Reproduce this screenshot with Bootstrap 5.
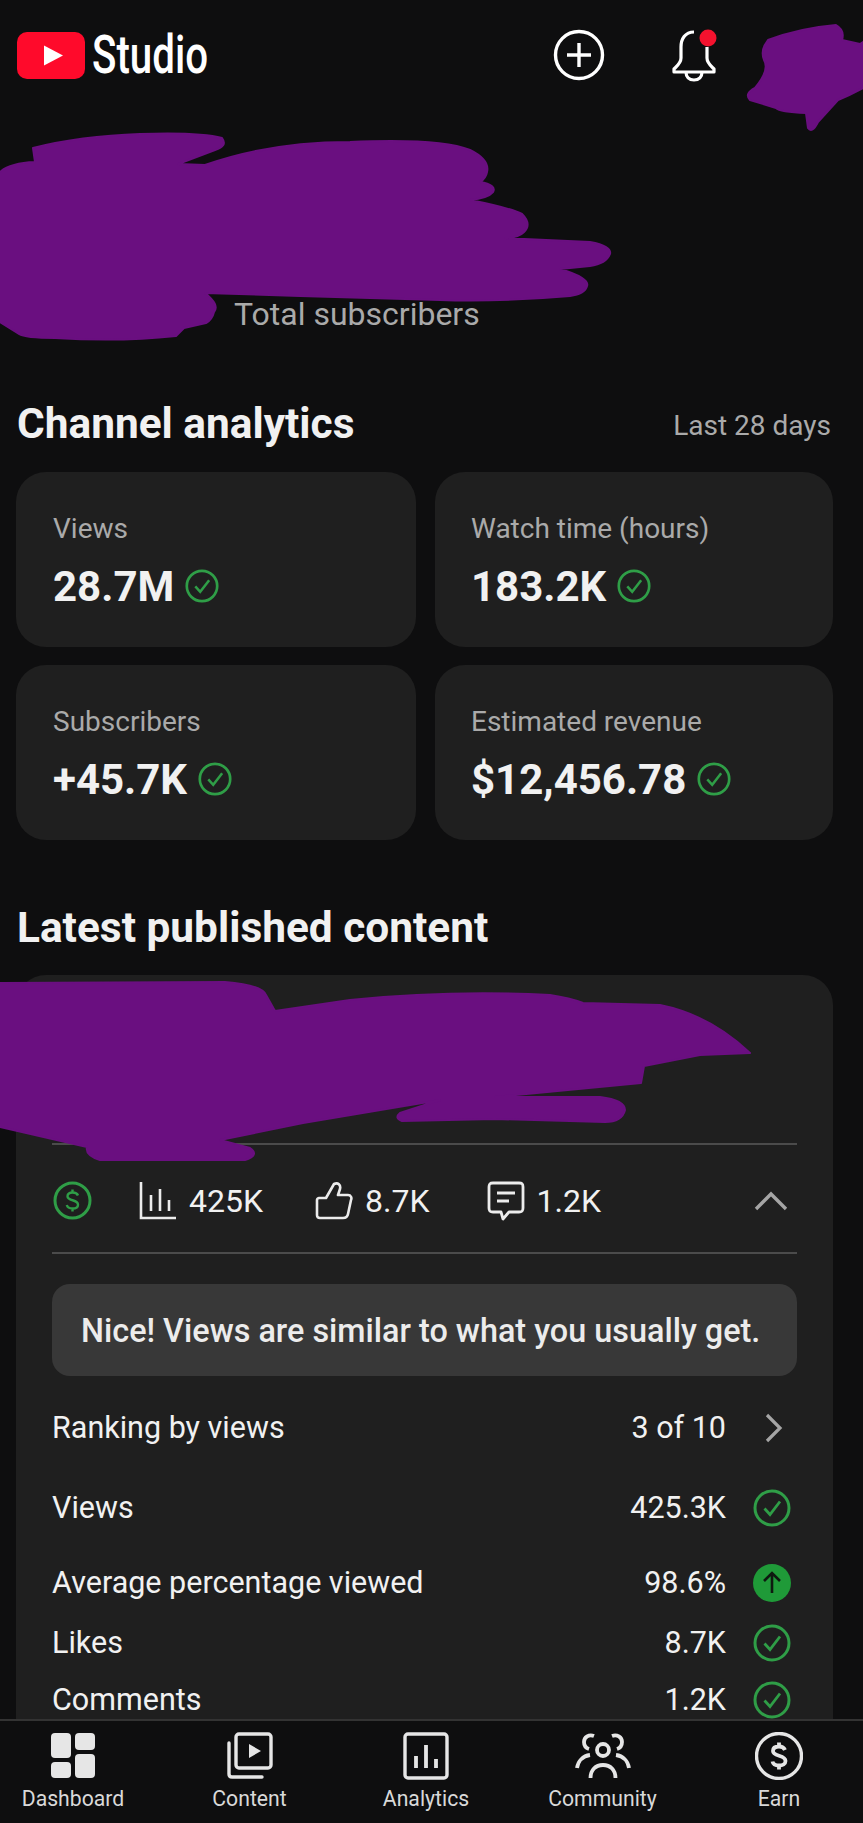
<!DOCTYPE html>
<html lang="en">
<head>
  <meta charset="UTF-8">
  <meta name="viewport" content="width=device-width, initial-scale=1.0">
  <title>YouTube Studio</title>
  <link href="https://cdn.jsdelivr.net/npm/bootstrap@5.3.3/dist/css/bootstrap.min.css" rel="stylesheet">
  <style>
    body {
      background-color: #0e0e0f;
      color: #f1f1f1;
      font-family: Roboto, "Liberation Sans", sans-serif;
      height: 100vh;
    }
    .top-bar { height: 110px; padding: 0 0 0 17px; }
    .logo-mark { width: 68px; height: 47px; }
    .logo-word {
      font-size: 53px;
      line-height: 1;
      font-weight: 500;
      margin: 0 0 0 7px;
      transform: scaleX(.76);
      transform-origin: left center;
      color: #fff;
    }
    .top-icons { margin: 0 0 0 auto; padding-right: 146px; gap: 66px; }
    .plus-icon { width: 52px; height: 52px; }
    .bell-icon { width: 46px; height: 54px; }
    .sub-block { height: 222px; padding: 186px 0 0 234px; }
    .sub-label { font-size: 32px; line-height: 36px; color: #aaa; }
    .page-body { padding: 0 30px 0 16px; }
    .section-head { height: 44px; margin-top: 70px; padding-right: 2px; }
    .section-title { font-size: 42.4px; line-height: 44px; font-weight: 700; margin: 0 0 0 1px; color: #f1f1f1; }
    .range-text { font-size: 28px; color: #aaa; margin-top: 4px; }
    .stat-grid { display: grid; grid-template-columns: 400px 398px; gap: 18px 19px; margin-top: 26px; }
    .stat-tile {
      background: #1f1f1f;
      border: 0;
      border-radius: 30px;
      height: 175px;
      padding: 39px 0 0 37px;
      color: #f1f1f1;
    }
    .stat-tile-wide { padding-left: 36px; }
    .stat-label { font-size: 28px; line-height: 36px; color: #aaa; }
    .stat-value { font-size: 42px; line-height: 46px; font-weight: 700; margin-top: 17px; gap: 11px; }
    .ok-small { width: 34px; height: 34px; margin-top: -2px; }
    .latest-head { margin-top: 66px; }
    .latest-card {
      background: #1f1f1f;
      border: 0;
      border-radius: 30px 30px 0 0;
      margin-top: 25px;
      padding: 0 36px;
      color: #f1f1f1;
      height: 760px;
    }
    .video-slot { height: 168px; }
    .line-rule { height: 2px; background: #4b4b4b; }
    .stats-row { height: 107px; font-size: 32px; padding-top: 4px; }
    .stat-bit { gap: 12px; }
    .stat-bit-next { margin-left: 52px; }
    .stat-bit-last { margin-left: 57px; }
    .money-icon { width: 39px; height: 39px; margin: 0 47px 0 1px; }
    .small-icon { width: 38px; height: 40px; }
    .chevron-icon { width: 36px; height: 24px; margin-right: 8px; }
    .tip-box {
      background: #383838;
      border-radius: 18px;
      height: 92px;
      margin-top: 30px;
      padding: 3px 0 0 29px;
      font-size: 32.4px;
      font-weight: 500;
      color: #ececec;
    }
    .metric-row { height: 40px; font-size: 30.5px; padding-right: 6px; }
    .metric-value { margin-left: auto; width: 180px; text-align: right; }
    .metric-icon { width: 38px; height: 38px; margin-left: 27px; flex-shrink: 0; }
    .gap-ranking { margin-top: 32px; }
    .gap-views { margin-top: 40px; }
    .gap-average { margin-top: 35px; }
    .gap-likes { margin-top: 20px; }
    .gap-comments { margin-top: 17px; }
    .tab-bar {
      height: 104px;
      background: #0e0e0f;
      border-top: 2px solid #333;
      padding: 11px 29px 0 18px;
      z-index: 5;
    }
    .tab-item { width: 110px; color: #d9d9d9; font-size: 21.2px; line-height: 26px; white-space: nowrap; }
    .tab-item svg { height: 48px; margin-bottom: 6px; width: 48px; }
    .tab-item svg.people-icon { width: 56px; }
    .scribble { position: absolute; top: 0; left: 0; pointer-events: none; z-index: 4; }
  </style>
</head>
<body class="d-flex flex-column overflow-hidden position-relative">

  <svg width="0" height="0" class="d-none">
    <symbol id="okCheck" viewBox="0 0 38 38">
      <circle cx="19" cy="19" r="17" fill="none" stroke="#2f9e47" stroke-width="3"/>
      <path d="M11.5 19.500l5.500 6 10-13" fill="none" stroke="#2f9e47" stroke-width="2.800"/>
    </symbol>
  </svg>

  <main class="flex-grow-1 overflow-hidden">
    <header class="top-bar d-flex align-items-center">
      <svg class="logo-mark" viewBox="0 0 68 47">
        <rect width="68" height="47" rx="10" fill="#ff0a2b"/>
        <path d="M27 13.500L46 23.500L27 33.500Z" fill="#fff"/>
      </svg>
      <div class="logo-word">Studio</div>
      <div class="top-icons d-flex align-items-center">
        <svg class="plus-icon" viewBox="0 0 52 52" fill="none" stroke="#fff">
          <circle cx="26" cy="26" r="23.500" stroke-width="3.400"/>
          <path d="M26 14v24M14 26h24" stroke-width="3.400"/>
        </svg>
        <svg class="bell-icon" viewBox="0 0 46 54" fill="none" stroke="#fff" stroke-width="3.200">
          <path d="M23 4C14 4 10 11 10 19V30C10 35 6 38 3 41V44H43V41C40 38 36 35 36 30V19" stroke-linejoin="round"/>
          <path d="M15 44C15 49 18 52 23 52S31 49 31 44"/>
          <circle cx="37" cy="10" r="8.500" fill="#f4122e" stroke="none"/>
        </svg>
      </div>
    </header>

    <section class="sub-block">
      <div class="sub-label">Total subscribers</div>
    </section>

    <div class="page-body">
      <div class="section-head d-flex justify-content-between align-items-center">
        <h2 class="section-title">Channel analytics</h2>
        <span class="range-text">Last 28 days</span>
      </div>

      <div class="stat-grid">
        <div class="card stat-tile">
          <div class="stat-label">Views</div>
          <div class="stat-value d-flex align-items-center">28.7M <svg class="ok-small"><use href="#okCheck"/></svg></div>
        </div>
        <div class="card stat-tile stat-tile-wide">
          <div class="stat-label">Watch time (hours)</div>
          <div class="stat-value d-flex align-items-center">183.2K <svg class="ok-small"><use href="#okCheck"/></svg></div>
        </div>
        <div class="card stat-tile">
          <div class="stat-label">Subscribers</div>
          <div class="stat-value d-flex align-items-center">+45.7K <svg class="ok-small"><use href="#okCheck"/></svg></div>
        </div>
        <div class="card stat-tile stat-tile-wide">
          <div class="stat-label">Estimated revenue</div>
          <div class="stat-value d-flex align-items-center">$12,456.78 <svg class="ok-small"><use href="#okCheck"/></svg></div>
        </div>
      </div>

      <h2 class="section-title latest-head">Latest published content</h2>

      <div class="card latest-card">
        <div class="video-slot"></div>
        <div class="line-rule"></div>

        <div class="stats-row d-flex align-items-center">
          <svg class="money-icon" viewBox="0 0 39 39" fill="none" stroke="#2f9e47">
            <circle cx="19.500" cy="19.500" r="17.500" stroke-width="3"/>
            <path d="M25 14.500C24 12 22 11.500 19.500 11.500C16.500 11.500 14.500 13 14.500 15.200C14.500 20.500 25 18 25 23.700C25 26 23 27.500 19.500 27.500C16.500 27.500 14.500 26.500 13.800 24M19.500 8.500V11.500M19.500 27.500V30.500" stroke-width="2.400"/>
          </svg>
          <div class="stat-bit d-flex align-items-center">
            <svg class="small-icon" viewBox="0 0 38 40" fill="none" stroke="#ececec" stroke-width="2.600">
              <path d="M2 1V37H37"/>
              <path d="M12 14V30M21 8V30M30 19V30"/>
            </svg>
            <span>425K</span>
          </div>
          <div class="stat-bit stat-bit-next d-flex align-items-center">
            <svg class="small-icon" viewBox="0 0 38 40" fill="none" stroke="#ececec" stroke-width="2.600" stroke-linejoin="round">
              <path d="M4 17H11L19 3C23 1 26 4 25 8L23 14H33C36 14 37 17 36 19L33 33C32.500 36 31 37 28 37H5C3 37 2 36 2 34V19C2 18 3 17 4 17Z"/>
            </svg>
            <span>8.7K</span>
          </div>
          <div class="stat-bit stat-bit-last d-flex align-items-center">
            <svg class="small-icon" viewBox="0 0 38 40" fill="none" stroke="#ececec" stroke-width="2.800" stroke-linejoin="round">
              <path d="M6 2H32C35 2 36 3 36 6V27C36 30 35 31 32 31H22L16 38L14 31H6C3 31 2 30 2 27V6C2 3 3 2 6 2Z"/>
              <path d="M10 12H28M10 20H22"/>
            </svg>
            <span>1.2K</span>
          </div>
          <svg class="chevron-icon ms-auto" viewBox="0 0 36 24" fill="none" stroke="#a5a5a5" stroke-width="3.400">
            <path d="M3 20L18 5L33 20"/>
          </svg>
        </div>

        <div class="line-rule"></div>

        <div class="tip-box d-flex align-items-center">Nice! Views are similar to what you usually get.</div>

        <div class="metric-row gap-ranking d-flex align-items-center">
          <span>Ranking by views</span>
          <span class="metric-value">3 of 10</span>
          <svg class="metric-icon" viewBox="0 0 38 38" fill="none" stroke="#a5a5a5" stroke-width="3.200">
            <path d="M14 6L27 19L14 32"/>
          </svg>
        </div>
        <div class="metric-row gap-views d-flex align-items-center">
          <span>Views</span>
          <span class="metric-value">425.3K</span>
          <svg class="metric-icon"><use href="#okCheck"/></svg>
        </div>
        <div class="metric-row gap-average d-flex align-items-center">
          <span>Average percentage viewed</span>
          <span class="metric-value">98.6%</span>
          <svg class="metric-icon" viewBox="0 0 38 38">
            <circle cx="19" cy="19" r="19" fill="#1f9a38"/>
            <path d="M19 29V9M11 17L19 9L27 17" fill="none" stroke="#0e1a10" stroke-width="2.600"/>
          </svg>
        </div>
        <div class="metric-row gap-likes d-flex align-items-center">
          <span>Likes</span>
          <span class="metric-value">8.7K</span>
          <svg class="metric-icon"><use href="#okCheck"/></svg>
        </div>
        <div class="metric-row gap-comments d-flex align-items-center">
          <span>Comments</span>
          <span class="metric-value">1.2K</span>
          <svg class="metric-icon"><use href="#okCheck"/></svg>
        </div>
      </div>
    </div>
  </main>

  <nav class="tab-bar d-flex justify-content-between flex-shrink-0">
    <div class="tab-item d-flex flex-column align-items-center">
      <svg viewBox="0 0 48 48" fill="#e6e6e6">
        <rect x="2" y="1" width="20" height="25" rx="4"/>
        <rect x="2" y="30" width="20" height="16" rx="4"/>
        <rect x="26" y="1" width="20" height="17" rx="4"/>
        <rect x="26" y="22" width="20" height="24" rx="4"/>
      </svg>
      <span>Dashboard</span>
    </div>
    <div class="tab-item d-flex flex-column align-items-center">
      <svg viewBox="0 0 48 48" fill="none" stroke="#e6e6e6" stroke-width="3.400">
        <rect x="10" y="2" width="35" height="34" rx="3"/>
        <path d="M3 11V42C3 44 4 45 6 45H36" stroke-linecap="round"/>
        <path d="M23 12L35 19L23 26Z" fill="#e6e6e6" stroke="none"/>
      </svg>
      <span>Content</span>
    </div>
    <div class="tab-item d-flex flex-column align-items-center">
      <svg viewBox="0 0 48 48" fill="none" stroke="#e6e6e6" stroke-width="3.400">
        <rect x="3" y="2" width="42" height="44" rx="3"/>
        <path d="M14 24V36M24 13V36M34 27V36" stroke-width="3.800"/>
      </svg>
      <span>Analytics</span>
    </div>
    <div class="tab-item d-flex flex-column align-items-center">
      <svg class="people-icon" viewBox="0 0 56 48" fill="none" stroke="#e6e6e6" stroke-width="3.800">
        <circle cx="28" cy="18" r="6"/>
        <path d="M15.500 46C15.500 38 20.500 33 28 33S40.500 38 40.500 46"/>
        <path d="M19 4C14 2 9 5 9 10C9 13 11 16 14 17"/>
        <path d="M37 4C42 2 47 5 47 10C47 13 45 16 42 17"/>
        <path d="M2 36C3 29 8 24 15 23"/>
        <path d="M54 36C53 29 48 24 41 23"/>
      </svg>
      <span>Community</span>
    </div>
    <div class="tab-item d-flex flex-column align-items-center">
      <svg viewBox="0 0 48 48" fill="none" stroke="#e6e6e6">
        <circle cx="24" cy="24" r="22.500" stroke-width="3.400"/>
        <path d="M30 18C29 15.500 27 14.500 24 14.500C20.500 14.500 18 16 18 19C18 25 30.500 22.500 30.500 29C30.500 32 27.500 33.500 24 33.500C20.500 33.500 18 32 17.500 29.500M24 10.500V14.500M24 33.500V37.500" stroke-width="3.800"/>
      </svg>
      <span>Earn</span>
    </div>
  </nav>

  <!-- redaction scribbles drawn over the page -->
  <svg class="scribble" width="863" height="1823" viewBox="0 0 863 1823" fill="#6a0f80" stroke="#6a0f80" stroke-width="2" stroke-linejoin="round">
    <path d="M768 40Q800 28 836 25Q845 30 842 40L860 44L863 42L863 88Q850 95 838 100L818 122Q812 134 808 128L806 113Q780 112 776 108L750 100Q744 94 755 88Q770 70 764 60Q760 50 768 40Z"/>
    <path d="M0 172Q10 163 35 162L33 148Q80 136 140 134Q200 132 222 138Q228 146 215 150L178 164L205 165Q270 142 350 142Q440 138 470 150Q490 160 487 172Q486 178 480 182Q497 185 493 192Q488 198 470 200Q510 208 522 214Q532 224 524 232Q518 238 505 238L590 242Q612 246 610 254Q606 264 590 266L560 269Q590 278 587 286Q585 294 570 296Q500 302 440 300L300 296L205 293Q220 305 214 312Q212 320 206 323L184 328L176 336Q120 342 55 338Q25 338 19 334L0 322Z"/>
    <path d="M0 983L225 982Q262 985 266 995L275 1011L350 1000Q450 990 550 995Q570 998 583 1003L660 1005Q710 1015 750 1053L700 1055L644 1066L641 1083L495 1097L600 1097Q625 1100 625 1110Q622 1122 605 1122L495 1119L402 1121Q394 1118 400 1113L440 1100L303 1123L220 1140L250 1148Q260 1155 245 1160L100 1160Q85 1155 87 1147L0 1127Z"/>
  </svg>

  <script src="https://cdn.jsdelivr.net/npm/bootstrap@5.3.3/dist/js/bootstrap.bundle.min.js"></script>
</body>
</html>
